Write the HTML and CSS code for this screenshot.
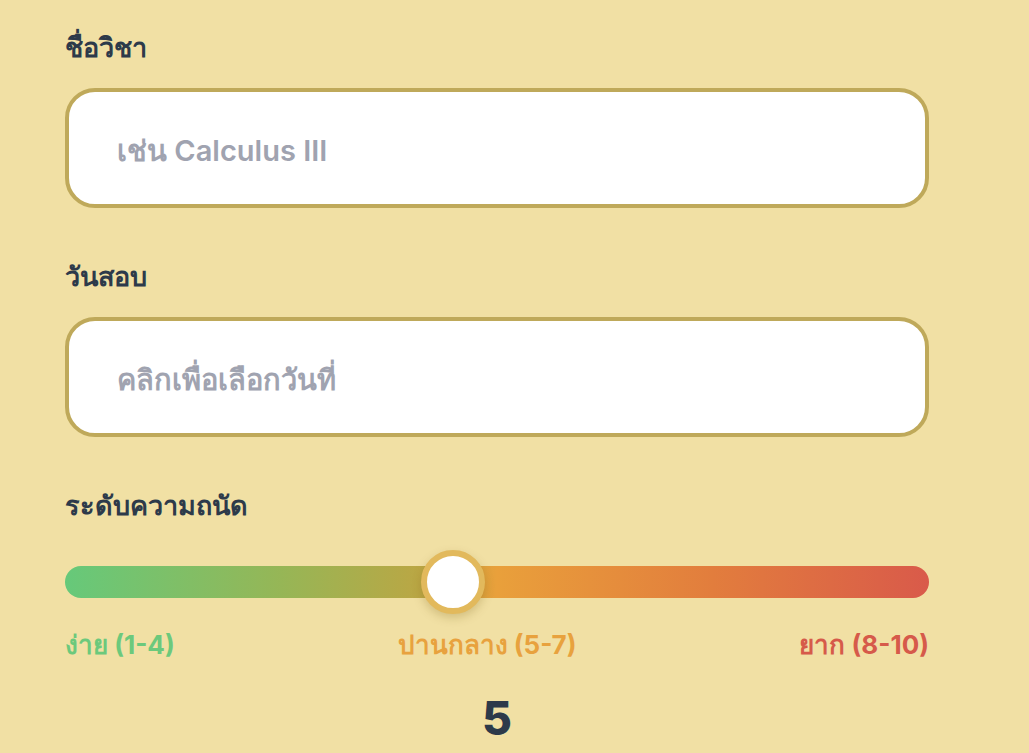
FILE: index.html
```html
<!DOCTYPE html>
<html lang="th">
<head>
<meta charset="utf-8">
<link rel="stylesheet" href="styles.css">
</head>
<body>
<div class="form">
  <div class="field">
    <label class="label">ชื่อวิชา</label>
    <div class="input placeholder">เช่น Calculus III</div>
  </div>
  <div class="field">
    <label class="label">วันสอบ</label>
    <div class="input placeholder">คลิกเพื่อเลือกวันที่</div>
  </div>
  <div class="field">
    <label class="label">ระดับความถนัด</label>
    <div class="slider">
      <div class="track"></div>
      <div class="thumb" style="left: calc((100% - 64px) * 0.4444)"></div>
    </div>
    <div class="scale">
      <span class="easy">ง่าย (1-4)</span>
      <span class="mid">ปานกลาง (5-7)</span>
      <span class="hard">ยาก (8-10)</span>
    </div>
    <div class="value">5</div>
  </div>
</div>
</body>
</html>
```
FILE: styles.css
```css
html, body {
  margin: 0;
  padding: 0;
  background: #f1e0a4;
}
body {
  font-family: "Inter", "Noto Sans", "DejaVu Sans", sans-serif;
  color: #2d3a4a;
}
.form {
  width: 864px;
  padding: 30px 0 0 65px;
  display: flex;
  flex-direction: column;
  gap: 51px;
}
.field {
  display: flex;
  flex-direction: column;
}
.label {
  font-size: 27px;
  font-weight: 700;
  line-height: 36px;
  margin-bottom: 22px;
  color: #2d3a4a;
}
.input {
  box-sizing: border-box;
  height: 120px;
  border: 4px solid #bfa95a;
  border-radius: 30px;
  background: #ffffff;
  padding: 6px 48px 0;
  display: flex;
  align-items: center;
  font-size: 29px;
  font-weight: 600;
}
.placeholder {
  color: #a0a3b0;
}
.slider {
  position: relative;
  height: 64px;
  margin-top: 4px;
  display: flex;
  align-items: center;
}
.track {
  width: 100%;
  height: 32px;
  border-radius: 16px;
  background: linear-gradient(90deg, #66c97a 0%, #96b656 25%, #c1a441 44%, #e9a03b 50%, #e27d3d 75%, #d95a4a 100%);
}
.thumb {
  position: absolute;
  top: 0;
  width: 64px;
  height: 64px;
  box-sizing: border-box;
  border-radius: 50%;
  background: #ffffff;
  border: 6px solid #e2b95c;
  box-shadow: 0 4px 10px rgba(120, 90, 20, 0.25);
}
.scale {
  display: flex;
  justify-content: space-between;
  margin-top: 14px;
  font-size: 26px;
  font-weight: 700;
  line-height: 34px;
}
.easy { color: #6cc97c; }
.mid { color: #e8a23e; }
.hard { color: #d65a4a; }
.value {
  text-align: center;
  font-size: 46px;
  font-weight: 800;
  line-height: 56px;
  margin-top: 28px;
  color: #2d3a4a;
}
```
